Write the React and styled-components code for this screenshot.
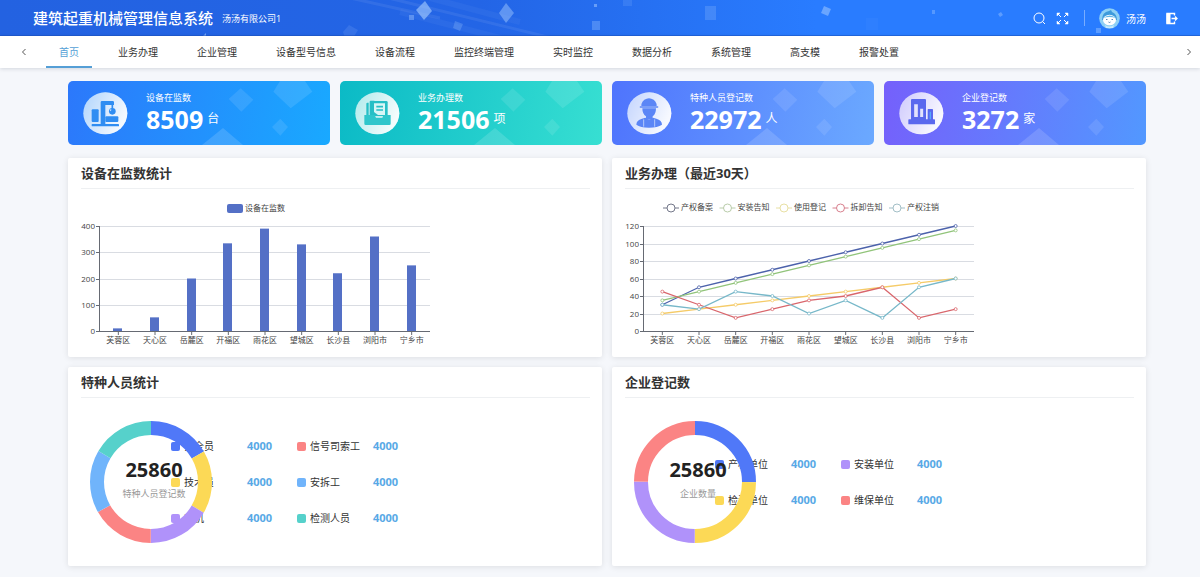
import styled, { createGlobalStyle } from "styled-components";

const GlobalStyle = createGlobalStyle`
  * {
    box-sizing: border-box;
  }

  body {
    margin: 0;
    background: #f5f7fb;
    color: #333;
    font-family: "Open Sans", "Noto Sans CJK SC", sans-serif;
    font-size: 10px;
  }

  button {
    border: 0;
    padding: 0;
    background: none;
    color: inherit;
    font: inherit;
    cursor: pointer;
  }
`;

const Header = styled.header`
  position: relative;
  display: flex;
  align-items: center;
  height: 36px;
  padding: 0 22px 0 33px;
  background: linear-gradient(90deg, #2362e1 0%, #2365e6 40%, #297cff 68%, #297cff 100%);
  color: #fff;
  overflow: hidden;
`;

const HeaderArt = styled.svg`
  position: absolute;
  inset: 0;
  width: 100%;
  height: 100%;
`;

const Brand = styled.h1`
  position: relative;
  margin: 0;
  font-size: 15px;
  font-weight: 500;
  line-height: 20px;
`;

const Company = styled.span`
  position: relative;
  margin-left: 9px;
  padding-top: 2px;
  font-size: 9px;
  line-height: 16px;
`;

const Tools = styled.div`
  position: relative;
  display: flex;
  align-items: center;
  margin-left: auto;
`;

const ToolButton = styled.button`
  display: flex;
  margin-right: 10px;
`;

const Divider = styled.span`
  width: 1px;
  height: 16px;
  margin: 0 14px 0 5px;
  background: #79adff;
`;

const User = styled.button`
  display: flex;
  align-items: center;
  gap: 6px;
  margin-right: 20px;
`;

const Nav = styled.nav`
  position: relative;
  display: flex;
  height: 32px;
  background: #fff;
  box-shadow: 0 1px 4px rgba(0, 21, 41, 0.14);
`;

const Arrow = styled.button`
  display: flex;
  align-items: center;
  justify-content: center;
  width: ${(props) => (props.$wide ? 48 : 22)}px;
  margin-right: ${(props) => (props.$wide ? -2 : 0)}px;
`;

const Tabs = styled.div`
  display: flex;
  flex: 1;
  gap: 13px;
`;

const Tab = styled.a`
  padding: 0 13px;
  border-bottom: 2px solid ${(props) => (props.$active ? "#559fd6" : "transparent")};
  color: ${(props) => (props.$active ? "#559fd6" : "#333")};
  line-height: 32px;
  white-space: nowrap;
  text-decoration: none;
`;

const Main = styled.main`
  display: flex;
  flex-direction: column;
  gap: 13px;
  padding: 13px 54px 10px 68px;
`;

const Stats = styled.section`
  display: grid;
  grid-template-columns: repeat(4, 1fr);
  gap: 10px;
`;

const Stat = styled.article`
  position: relative;
  display: flex;
  align-items: center;
  gap: 18px;
  height: 64px;
  padding-left: 15px;
  border-radius: 5px;
  background: linear-gradient(100deg, ${(props) => props.$from}, ${(props) => props.$to});
  color: #fff;
  overflow: hidden;
`;

const StatArt = styled.svg`
  position: absolute;
  top: 0;
  right: 0;
  width: 262px;
  height: 64px;
`;

const Badge = styled.svg`
  position: relative;
  flex: none;
  width: 45px;
  height: 43px;
`;

const StatText = styled.div`
  position: relative;
`;

const StatLabel = styled.div`
  font-size: 9px;
  line-height: 12px;
`;

const StatValue = styled.div`
  display: flex;
  align-items: center;
  gap: 4px;
  font-size: 12px;
  line-height: 30px;

  strong {
    font-size: 25px;
    font-weight: 700;
  }
`;

const Panels = styled.section`
  display: grid;
  grid-template-columns: repeat(2, 1fr);
  gap: 10px;
`;

const PanelBox = styled.article`
  display: flex;
  flex-direction: column;
  min-height: 199px;
  padding: 0 12px 0 13px;
  border-radius: 2px;
  background: #fff;
  box-shadow: 0 1px 6px rgba(0, 0, 0, 0.1);
`;

const PanelTitle = styled.h2`
  margin: 0;
  border-bottom: 1px solid #eef0f2;
  font-size: 13px;
  font-weight: 700;
  line-height: 30px;
`;

const Chart = styled.svg`
  display: block;
  width: 362px;
  height: 168px;

  text {
    fill: #444;
    font-size: 8px;
  }
`;

const RingRow = styled.div`
  display: flex;
  flex: 1;
  align-items: center;
  padding-left: 9px;
`;

const Ring = styled.svg`
  position: relative;
  z-index: 1;
  flex: none;
  width: 122px;
  height: 122px;
  pointer-events: none;
`;

const RingTotal = styled.text`
  fill: #222;
  font-size: 20px;
  font-weight: 700;
`;

const RingLabel = styled.text`
  fill: #999;
  font-size: 9px;
`;

// the legend slides under the right side of the ring
const Legend = styled.ul`
  display: grid;
  grid-template-rows: repeat(${(props) => props.$rows}, 36px);
  grid-auto-columns: 126px;
  grid-auto-flow: column;
  margin: 0 0 0 -41px;
  padding: 0;
  list-style: none;
`;

const LegendItem = styled.li`
  display: flex;
  align-items: center;
  line-height: 16px;
`;

const Swatch = styled.span`
  width: 9px;
  height: 9px;
  margin-right: 4px;
  border-radius: 2px;
  background: ${(props) => props.$color};
`;

const LegendName = styled.span`
  width: 63px;
`;

const LegendValue = styled.b`
  color: #58a9e6;
  font-size: 11px;
`;

const tabs = [
  "首页",
  "业务办理",
  "企业管理",
  "设备型号信息",
  "设备流程",
  "监控终端管理",
  "实时监控",
  "数据分析",
  "系统管理",
  "高支模",
  "报警处置",
];

const areas = ["芙蓉区", "天心区", "岳麓区", "开福区", "雨花区", "望城区", "长沙县", "浏阳市", "宁乡市"];

const devices = [10, 52, 200, 334, 390, 330, 220, 360, 250];

const business = [
  { name: "产权备案", color: "#4c62ab", key: "#74788a", data: [30, 50, 60, 70, 80, 90, 100, 110, 120] },
  { name: "安装告知", color: "#91c47a", key: "#b9ccaa", data: [35, 45, 55, 65, 75, 85, 95, 105, 115] },
  { name: "使用登记", color: "#f5cb68", key: "#e8e0a4", data: [20, 25, 30, 35, 40, 45, 50, 55, 60] },
  { name: "拆卸告知", color: "#d9666c", key: "#d8808e", data: [45, 30, 15, 25, 35, 40, 50, 15, 25] },
  { name: "产权注销", color: "#77b8c9", key: "#a3bfc7", data: [30, 25, 45, 40, 20, 35, 15, 50, 60] },
];

const BLUE = "#5078f8";
const YELLOW = "#fcd956";
const PURPLE = "#b092fa";
const RED = "#fb8484";
const SKY = "#70b4fb";
const TEAL = "#56d1cb";

const staff = [
  { name: "安全员", color: BLUE, value: 4000 },
  { name: "技术员", color: YELLOW, value: 4000 },
  { name: "司机", color: PURPLE, value: 4000 },
  { name: "信号司索工", color: RED, value: 4000 },
  { name: "安拆工", color: SKY, value: 4000 },
  { name: "检测人员", color: TEAL, value: 4000 },
];

const companies = [
  { name: "产权单位", color: BLUE, value: 4000 },
  { name: "检测单位", color: YELLOW, value: 4000 },
  { name: "安装单位", color: PURPLE, value: 4000 },
  { name: "维保单位", color: RED, value: 4000 },
];

function CraneIcon() {
  return (
    <g fill="#2f8df2">
      <rect x="26" y="52" width="21" height="38" rx="3" />
      <path d="M53 99V31q0-4 4-4h32q4 0 4 4v8H67v60z" />
      <path d="M88 36v14" stroke="#2f8df2" strokeWidth="5" />
      <circle cx="88" cy="58" r="10" />
      <path d="M80 52l6 1-4 5z" fill="#d5e8fd" />
      <rect x="67" y="73" width="39" height="17" rx="3" />
      <rect x="26" y="96" width="82" height="7" rx="2" />
    </g>
  );
}

function FilesIcon() {
  return (
    <g>
      <path d="M34 72V35q0-3 3-3h4v40zM44 72V29q0-3 3-3h11v46z" fill="#27bfc6" />
      <path d="M50 72V31q0-4 4-4h40q4 0 4 4v42z" fill="#27bfc6" />
      <path d="M57 34h33v35H69l-12-9z" fill="#d9f6f6" />
      <path d="M64 44h20M64 54h20" stroke="#27bfc6" strokeWidth="5" />
      <path d="M28 69h31l4 8h19l4-8h21v26q0 4-4 4H32q-4 0-4-4z" fill="#2fc6cb" />
    </g>
  );
}

function WorkerIcon() {
  return (
    <g fill="#5b86f6">
      <path d="M43 42a23 23 0 0 1 16-22q7-3 14 0a23 23 0 0 1 16 22z" />
      <rect x="38" y="43" width="56" height="4" rx="2" />
      <path d="M46 49h41q0 17-10 24v8H57v-8q-11-7-11-24z" />
      <path d="M55 77q11 10 23 0l10 3q17 5 17 18-13 9-39 9t-38-9q0-14 17-18z" />
      <path d="M50 82v22M83 82v22" fill="none" stroke="#b4c8fb" strokeWidth="3" />
    </g>
  );
}

function BuildingIcon() {
  return (
    <g fill="#5a68ee">
      <path d="M36 84V24q0-3 3-3h39q3 0 3 3v60z" />
      <rect x="86" y="51" width="16" height="36" rx="2" />
      <rect x="28" y="82" width="80" height="15" rx="2" />
      <path d="M51 37v38" stroke="#e2e2fd" strokeWidth="11" />
      <path d="M68 50v25" stroke="#e2e2fd" strokeWidth="9" />
      <path d="M94 59v23" stroke="#54a8fb" strokeWidth="4" />
    </g>
  );
}

const stats = [
  { id: "device", label: "设备在监数", value: 8509, unit: "台", from: "#2c78fb", to: "#19a9ff", tint: "#7db8fb", Icon: CraneIcon },
  { id: "business", label: "业务办理数", value: 21506, unit: "项", from: "#0bbac6", to: "#37dfd2", tint: "#7bdcdf", Icon: FilesIcon },
  { id: "staff", label: "特种人员登记数", value: 22972, unit: "人", from: "#4f74fd", to: "#6ba9ff", tint: "#9db9fd", Icon: WorkerIcon },
  { id: "company", label: "企业登记数", value: 3272, unit: "家", from: "#7560fb", to: "#5298ff", tint: "#b0a8fb", Icon: BuildingIcon },
];

function HeaderBackground() {
  return (
    <HeaderArt viewBox="0 0 1200 36" preserveAspectRatio="xMidYMid slice" aria-hidden="true">
      <g stroke="#fff" fill="none">
        <path d="M350-2 440 18M372-6 560 40" strokeOpacity="0.07" strokeWidth="3" />
        <path d="M400 12 500 38M430-2 520 22" strokeOpacity="0.04" strokeWidth="6" />
      </g>
      <g fill="#a9ceff">
        <path d="m425 1 7 10-8 9-8-10z" fillOpacity="0.6" />
        <path d="m506 3 8 10-8 10-7-10z" fillOpacity="0.45" />
        <path d="m455 21 8 3-3 7-7-3z" fillOpacity="0.25" />
        <path d="M409 15h5v5h-5z" fillOpacity="0.4" />
        <path d="m349 25 9 5-5 8h-8l-2-6z" fillOpacity="0.14" />
        <path d="m203 36 3-3v3z" fillOpacity="0.6" />
        <path d="M592 21h8v9h-8z" fillOpacity="0.3" />
        <path d="M594 4h3v3h-3z" fillOpacity="0.5" />
        <path d="M623 0h9v6h-9z" fillOpacity="0.14" />
        <path d="M705 6h11v14h-11z" fillOpacity="0.22" />
        <path d="m824 6 7 3-3 7-7-3z" fillOpacity="0.5" />
        <path d="M932 10h3v4h-3z" fillOpacity="0.35" />
        <path d="M866 18h12v12h-12z" fillOpacity="0.04" />
        <path d="m998 14 3-2 2 3-3 2z" fillOpacity="0.4" />
        <path d="M1096 28h5v5h-5z" fillOpacity="0.4" />
      </g>
      <path d="M0 35.5h1200" stroke="#1b50b8" strokeOpacity="0.45" />
    </HeaderArt>
  );
}

function TopBar() {
  return (
    <Header>
      <HeaderBackground />
      <Brand>建筑起重机械管理信息系统</Brand>
      <Company>汤汤有限公司1</Company>
      <Tools>
        <ToolButton aria-label="搜索">
          <svg width="13" height="13" viewBox="0 0 13 13" fill="none" stroke="#fff">
            <circle cx="6" cy="6" r="5" />
            <path d="m9.500 9.500 2.500 2.500" />
          </svg>
        </ToolButton>
        <ToolButton aria-label="全屏">
          <svg width="13" height="13" viewBox="0 0 13 13" fill="#fff" stroke="#fff">
            <path d="m1.500 1.500 3.500 3.500M11.500 1.500 8 5M1.500 11.500 5 8M11.500 11.500 8 8" />
            <path d="M1 4V1h3zM9 1h3v3zM1 9v3h3zM12 9v3H9z" strokeWidth="0.500" />
          </svg>
        </ToolButton>
        <Divider />
        <User>
          <svg width="21" height="21" viewBox="0 0 21 21" aria-hidden="true">
            <circle cx="10.500" cy="10.500" r="10.300" fill="#8ed0f5" />
            <path d="M3 12q0-8 7-9l2-1 1 2q5 2 5 8z" fill="#3e9bdc" />
            <ellipse cx="10.500" cy="12" rx="6.500" ry="5.200" fill="#fff" />
            <path d="M4 10q7-5 13 0-7-2-13 0z" fill="#62b8ea" />
            <path d="M7 11.500h1.500M12.500 11.500H14M9.500 14q1 1 2 0" stroke="#3a6fa5" strokeWidth="0.800" fill="none" />
            <path d="M6 17q4 3 9 0l-1 3H7z" fill="#c8e9fb" />
          </svg>
          汤汤
        </User>
        <button aria-label="退出">
          <svg width="12" height="13" viewBox="0 0 12 13" fill="none" stroke="#fff" style={{ display: "block" }}>
            <path d="M8.500 3.500v-2H1v10h7.500v-2" strokeWidth="1.400" />
            <path d="M1 1.500h3v10H1z" fill="#fff" />
            <path d="M5.500 6.500h5M9 4.500l2 2-2 2" strokeWidth="1.300" />
          </svg>
        </button>
      </Tools>
    </Header>
  );
}

function StatCard({ item }) {
  const { id, Icon } = item;
  return (
    <Stat $from={item.from} $to={item.to}>
      <StatArt viewBox="0 0 786 192" fill="#fff" aria-hidden="true">
        <path d="m518 22 38 34-36 36-38-38z" fillOpacity="0.1" />
        <path d="M636 0h75l22 32-65 50-52-50z" fillOpacity="0.11" />
        <path d="m637 113 23 25-23 26-25-26z" fillOpacity="0.1" />
        <path d="m465 141 60 51H402z" fillOpacity="0.14" />
      </StatArt>
      <Badge viewBox="0 0 135 129" aria-hidden="true">
        <defs>
          <linearGradient id={`badge-${id}`} x1="0" y1="0.300" x2="0.900" y2="0.700">
            <stop offset="0" stopColor="#fff" stopOpacity="0.45" />
            <stop offset="1" stopColor="#fff" stopOpacity="0.92" />
          </linearGradient>
        </defs>
        <ellipse cx="67" cy="64" rx="66" ry="63" fill={item.tint} />
        <ellipse cx="67" cy="64" rx="66" ry="63" fill={`url(#badge-${id})`} />
        <Icon />
      </Badge>
      <StatText>
        <StatLabel>{item.label}</StatLabel>
        <StatValue>
          <strong>{item.value}</strong>
          {item.unit}
        </StatValue>
      </StatText>
    </Stat>
  );
}

const AXIS_LEFT = 19;
const AXIS_RIGHT = 349;
const AXIS_TOP = 37;
const AXIS_BOTTOM = 142;
const STEP = (AXIS_RIGHT - AXIS_LEFT) / areas.length;

const xOf = (index) => AXIS_LEFT + STEP * (index + 0.5);
const yOf = (value, max) => AXIS_BOTTOM - (value / max) * (AXIS_BOTTOM - AXIS_TOP);

function Axes({ max, interval }) {
  const marks = [];
  for (let value = 0; value <= max; value += interval) marks.push(value);

  return (
    <g>
      {marks.map((value) => {
        const y = Math.round(yOf(value, max)) + 0.5;
        return (
          <g key={value}>
            {value > 0 && <path d={`M${AXIS_LEFT} ${y}H${AXIS_RIGHT}`} stroke="#d9dce2" />}
            <path d={`M${AXIS_LEFT - 4} ${y}h4`} stroke="#666a73" />
            <text x={AXIS_LEFT - 5} y={y + 2} textAnchor="end">
              {value}
            </text>
          </g>
        );
      })}
      <path d={`M${AXIS_LEFT - 0.5} ${AXIS_TOP}V${AXIS_BOTTOM + 1}`} stroke="#666a73" />
      {areas.map((area, index) => (
        <text key={area} x={xOf(index)} y={AXIS_BOTTOM + 12} textAnchor="middle">
          {area}
        </text>
      ))}
    </g>
  );
}

function BaseLine() {
  return (
    <g stroke="#666a73">
      <path d={`M${AXIS_LEFT} ${AXIS_BOTTOM + 0.5}H${AXIS_RIGHT}`} />
      {areas.map((area, index) => (
        <path key={area} d={`M${xOf(index)} ${AXIS_BOTTOM}v4`} />
      ))}
    </g>
  );
}

function BarChart() {
  return (
    <Chart viewBox="0 0 362 168" role="img" aria-label="设备在监数统计">
      <rect x="146" y="15" width="16" height="9" rx="2" fill="#5470c6" />
      <text x="164" y="22">
        设备在监数
      </text>
      <Axes max={400} interval={100} />
      {devices.map((value, index) => (
        <rect
          key={areas[index]}
          x={Math.round(xOf(index) - 5)}
          y={yOf(value, 400)}
          width="9"
          height={AXIS_BOTTOM - yOf(value, 400)}
          fill="#5470c6"
        />
      ))}
      <BaseLine />
    </Chart>
  );
}

function LineChart() {
  return (
    <Chart viewBox="0 0 362 168" role="img" aria-label="业务办理">
      {business.map((series, index) => {
        const left = 38 + index * 56.5;
        return (
          <g key={series.name}>
            <path d={`M${left} 19h16`} stroke={series.key} />
            <circle cx={left + 8} cy="19" r="4" fill="#fff" stroke={series.key} />
            <text x={left + 18} y="21">
              {series.name}
            </text>
          </g>
        );
      })}
      <Axes max={120} interval={20} />
      <BaseLine />
      {business.map((series) => (
        <g key={series.name} stroke={series.color}>
          <polyline
            points={series.data.map((value, index) => `${xOf(index)},${yOf(value, 120)}`).join(" ")}
            fill="none"
            strokeWidth="1.300"
          />
          {series.data.map((value, index) => (
            <circle key={areas[index]} cx={xOf(index)} cy={yOf(value, 120)} r="1.500" fill="#fff" strokeWidth="0.800" />
          ))}
        </g>
      ))}
    </Chart>
  );
}

function RingChart({ items, total, label, rows }) {
  const length = 2 * Math.PI * 54;
  const part = length / items.length;

  return (
    <RingRow>
      <Ring viewBox="0 0 122 122">
        <g transform="rotate(-90 61 61)" fill="none" strokeWidth="14">
          {items.map((item, index) => (
            <circle
              key={item.name}
              cx="61"
              cy="61"
              r="54"
              stroke={item.color}
              strokeDasharray={`${part} ${length - part}`}
              strokeDashoffset={-part * index}
            />
          ))}
        </g>
        <RingTotal x="64" y="56" textAnchor="middle">
          {total}
        </RingTotal>
        <RingLabel x="64" y="76" textAnchor="middle">
          {label}
        </RingLabel>
      </Ring>
      <Legend $rows={rows}>
        {items.map((item) => (
          <LegendItem key={item.name}>
            <Swatch $color={item.color} />
            <LegendName>{item.name}</LegendName>
            <LegendValue>{item.value}</LegendValue>
          </LegendItem>
        ))}
      </Legend>
    </RingRow>
  );
}

function Panel({ title, children }) {
  return (
    <PanelBox>
      <PanelTitle>{title}</PanelTitle>
      {children}
    </PanelBox>
  );
}

function App() {
  return (
    <>
      <GlobalStyle />
      <TopBar />
      <Nav>
        <Arrow $wide aria-label="向左">
          <svg width="6" height="8" viewBox="0 0 6 8" fill="none" stroke="#555">
            <path d="M4.500 1 1.500 4l3 3" />
          </svg>
        </Arrow>
        <Tabs>
          {tabs.map((tab, index) => (
            <Tab key={tab} href="#" $active={index === 0}>
              {tab}
            </Tab>
          ))}
        </Tabs>
        <Arrow aria-label="向右">
          <svg width="6" height="8" viewBox="0 0 6 8" fill="none" stroke="#555">
            <path d="m1.500 1 3 3-3 3" />
          </svg>
        </Arrow>
      </Nav>
      <Main>
        <Stats>
          {stats.map((item) => (
            <StatCard key={item.id} item={item} />
          ))}
        </Stats>
        <Panels>
          <Panel title="设备在监数统计">
            <BarChart />
          </Panel>
          <Panel title="业务办理（最近30天）">
            <LineChart />
          </Panel>
          <Panel title="特种人员统计">
            <RingChart items={staff} total={25860} label="特种人员登记数" rows={3} />
          </Panel>
          <Panel title="企业登记数">
            <RingChart items={companies} total={25860} label="企业数量" rows={2} />
          </Panel>
        </Panels>
      </Main>
    </>
  );
}

export default App;
